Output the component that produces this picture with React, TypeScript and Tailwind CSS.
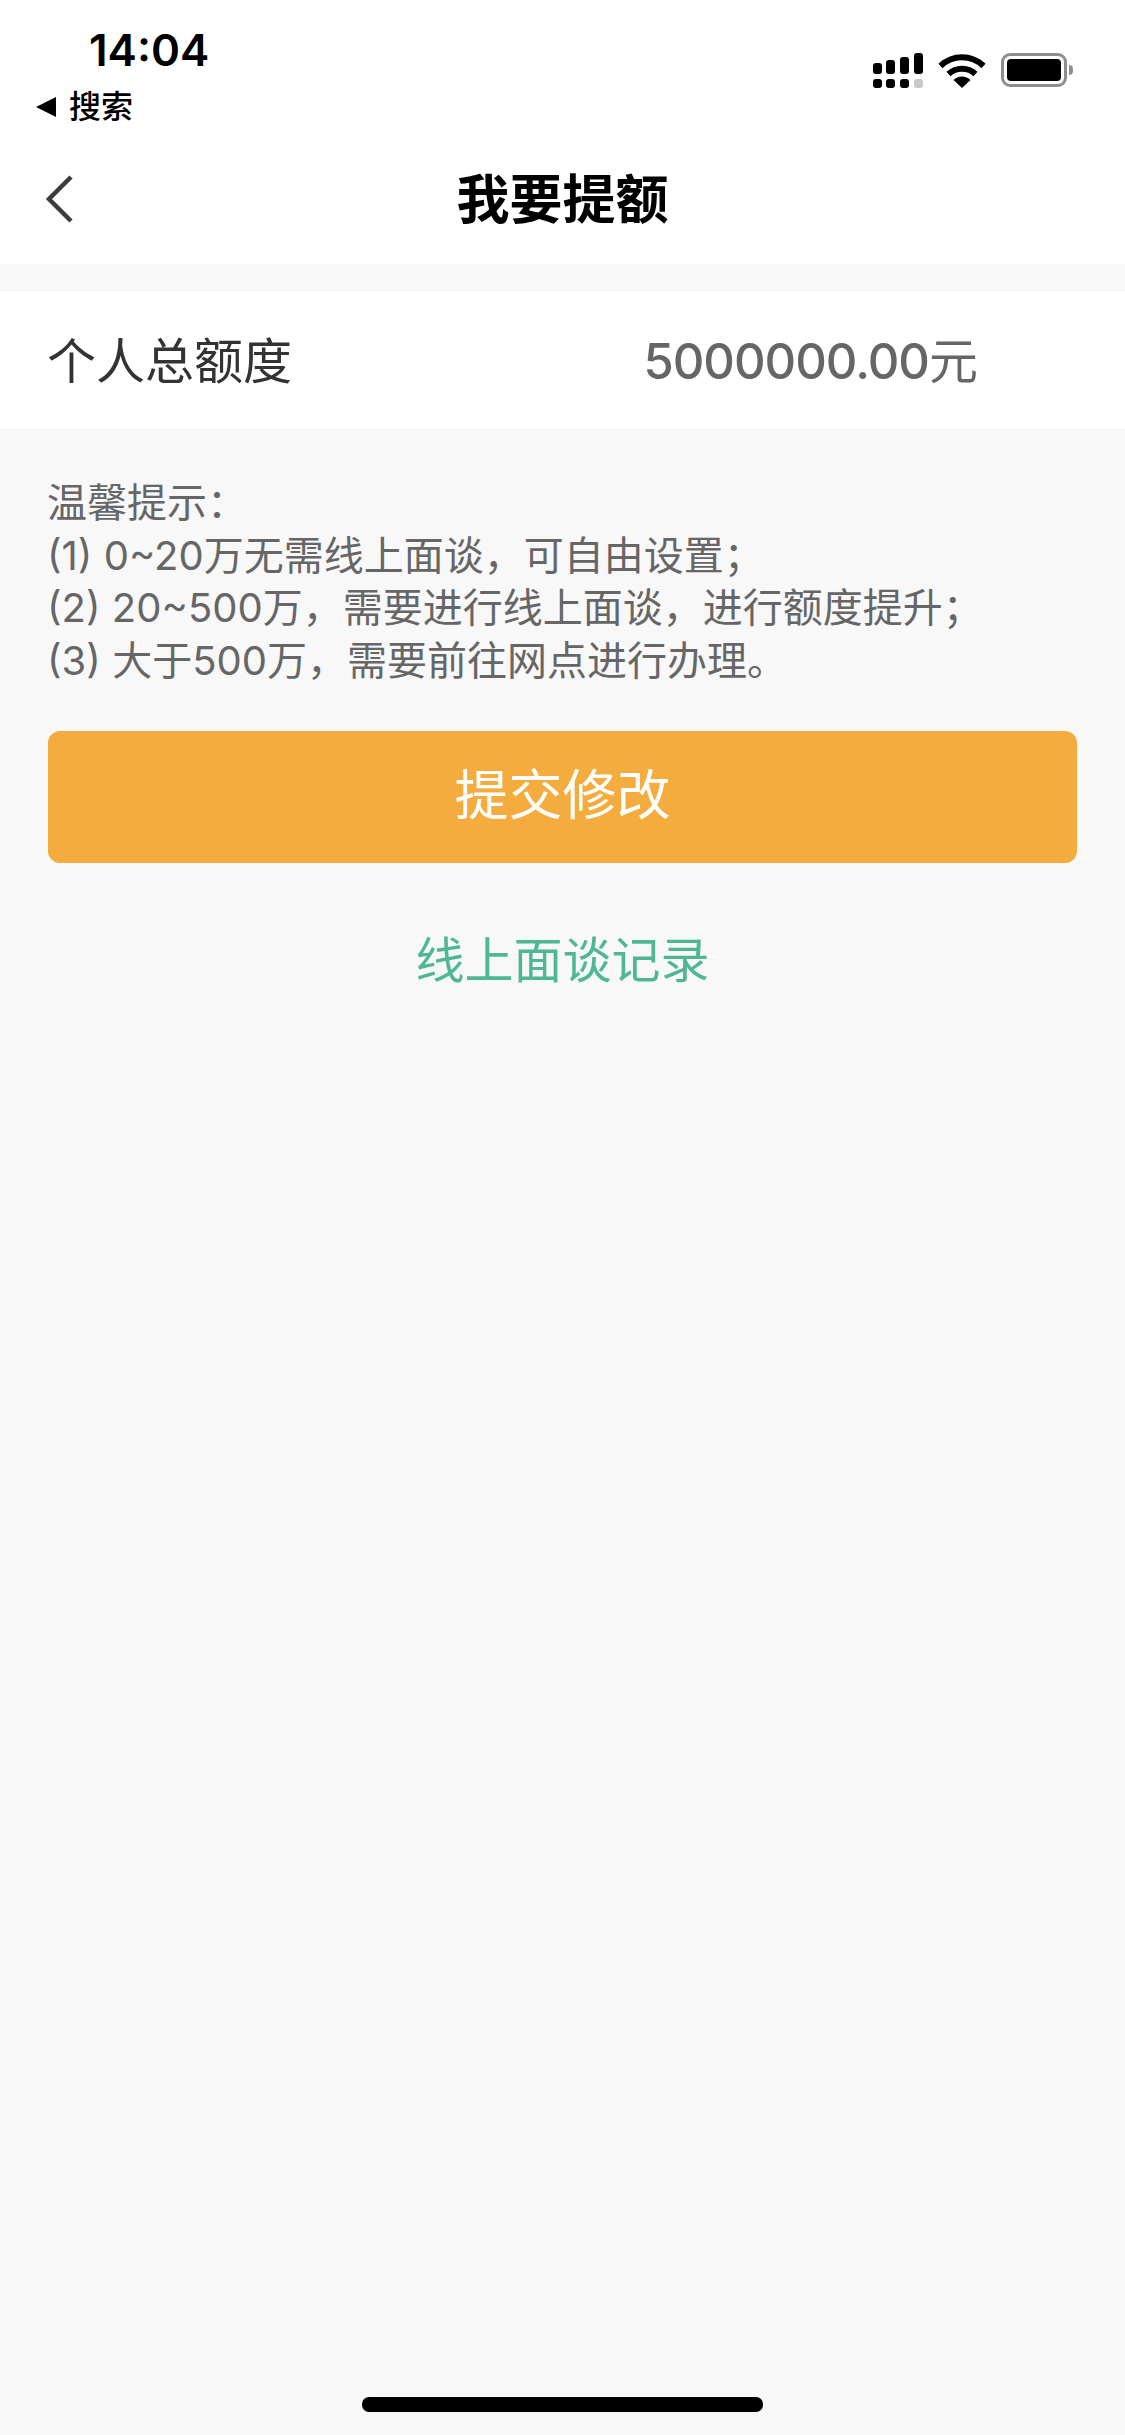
import React from 'react';

const cjk = "font-['Inter','Noto_Sans_CJK_SC',sans-serif]";

const hints = [
  '温馨提示：',
  '(1) 0~20万无需线上面谈，可自由设置；',
  '(2) 20~500万，需要进行线上面谈，进行额度提升；',
  '(3) 大于500万，需要前往网点进行办理。',
];

const SignalIcon = () => (
  <svg width="50" height="36" viewBox="0 0 50 36">
    <rect x="0" y="10" width="9" height="11" rx="3" fill="#000" />
    <rect x="13" y="7" width="9" height="14" rx="3" fill="#000" />
    <rect x="27" y="4" width="9" height="17" rx="3" fill="#000" />
    <rect x="41" y="0" width="9" height="21" rx="3" fill="#000" />
    <rect x="0" y="26" width="9" height="9" rx="3" fill="#000" />
    <rect x="13" y="26" width="9" height="9" rx="3" fill="#000" />
    <rect x="27" y="26" width="9" height="9" rx="3" fill="#000" />
    <rect x="41" y="26" width="9" height="9" rx="3" fill="#c8c8c8" />
  </svg>
);

const WifiIcon = () => (
  <svg width="48" height="36" viewBox="0 0 48 36">
    <path d="M2.5 13 A31 31 0 0 1 45.5 13" fill="none" stroke="#000" strokeWidth="6" />
    <path d="M10.5 21 A20 20 0 0 1 37.5 21" fill="none" stroke="#000" strokeWidth="6" />
    <path d="M15.5 27 A12 12 0 0 1 32.5 27 L24 35 Z" fill="#000" />
  </svg>
);

const BatteryIcon = () => (
  <div className="flex items-center">
    <div className="w-[66px] h-[34px] rounded-[9px] border-[3px] border-[#8e8e8e] p-[3px]">
      <div className="w-full h-full rounded-[4px] bg-black" />
    </div>
    <div className="w-[4px] h-[10px] ml-[2px] rounded-r-[4px] bg-[#8e8e8e]" />
  </div>
);

export default function App() {
  return (
    <div className={`${cjk} relative flex flex-col w-[1125px] h-[2435px] overflow-hidden bg-[#f8f8f8]`}>
      <div className="bg-white h-[264px] flex flex-col">
        <div className="flex justify-between h-[140px]">
          <div className="pl-[36px] pt-[23px] flex flex-col">
            <span className="ml-[53px] text-[44px] leading-[54px] font-semibold text-black">14:04</span>
            <div className="mt-[10px] flex items-center gap-[13px]">
              <span className="w-0 h-0 border-y-[10px] border-y-transparent border-r-[20px] border-r-black" />
              <span className="text-[32px] leading-[40px] font-medium text-black">搜索</span>
            </div>
          </div>
          <div className="pt-[53px] pr-[52px] flex items-start gap-[15px]">
            <SignalIcon />
            <WifiIcon />
            <BatteryIcon />
          </div>
        </div>
        <div className="relative flex-1 flex items-center justify-center -mt-[3px]">
          <svg className="absolute left-[44px] top-[36px]" width="32" height="52" viewBox="0 0 32 52">
            <path d="M27 4 L5 26 L27 48" fill="none" stroke="#3c3c3c" strokeWidth="4.5" />
          </svg>
          <span className="text-[53px] font-bold text-black">我要提额</span>
        </div>
      </div>

      <div className="mt-[28px] h-[136px] bg-white flex items-center justify-between pl-[47px] pr-[147px] pt-[3px]">
        <span className="text-[49px] text-[#333]">个人总额度</span>
        <span className="text-[49px] font-medium text-[#666] tracking-[-1px]">
          5000000.00<span className="font-normal tracking-normal">元</span>
        </span>
      </div>

      <div className="mt-[49px] px-[47px] text-[40px] leading-[52.5px] text-[#666]">
        {hints.map((line) => (
          <p key={line} className="whitespace-nowrap">{line}</p>
        ))}
      </div>

      <button className="mt-[44px] mx-[48px] h-[132px] pb-[3px] rounded-[12px] bg-[#f3ac3d] text-white text-[54px]">
        提交修改
      </button>

      <div className="mt-[66px] text-center text-[49px] leading-[64px] text-[#4fb795]">线上面谈记录</div>

      <div className="absolute left-[362px] bottom-[23px] w-[401px] h-[15px] rounded-[7px] bg-black" />
    </div>
  );
}
